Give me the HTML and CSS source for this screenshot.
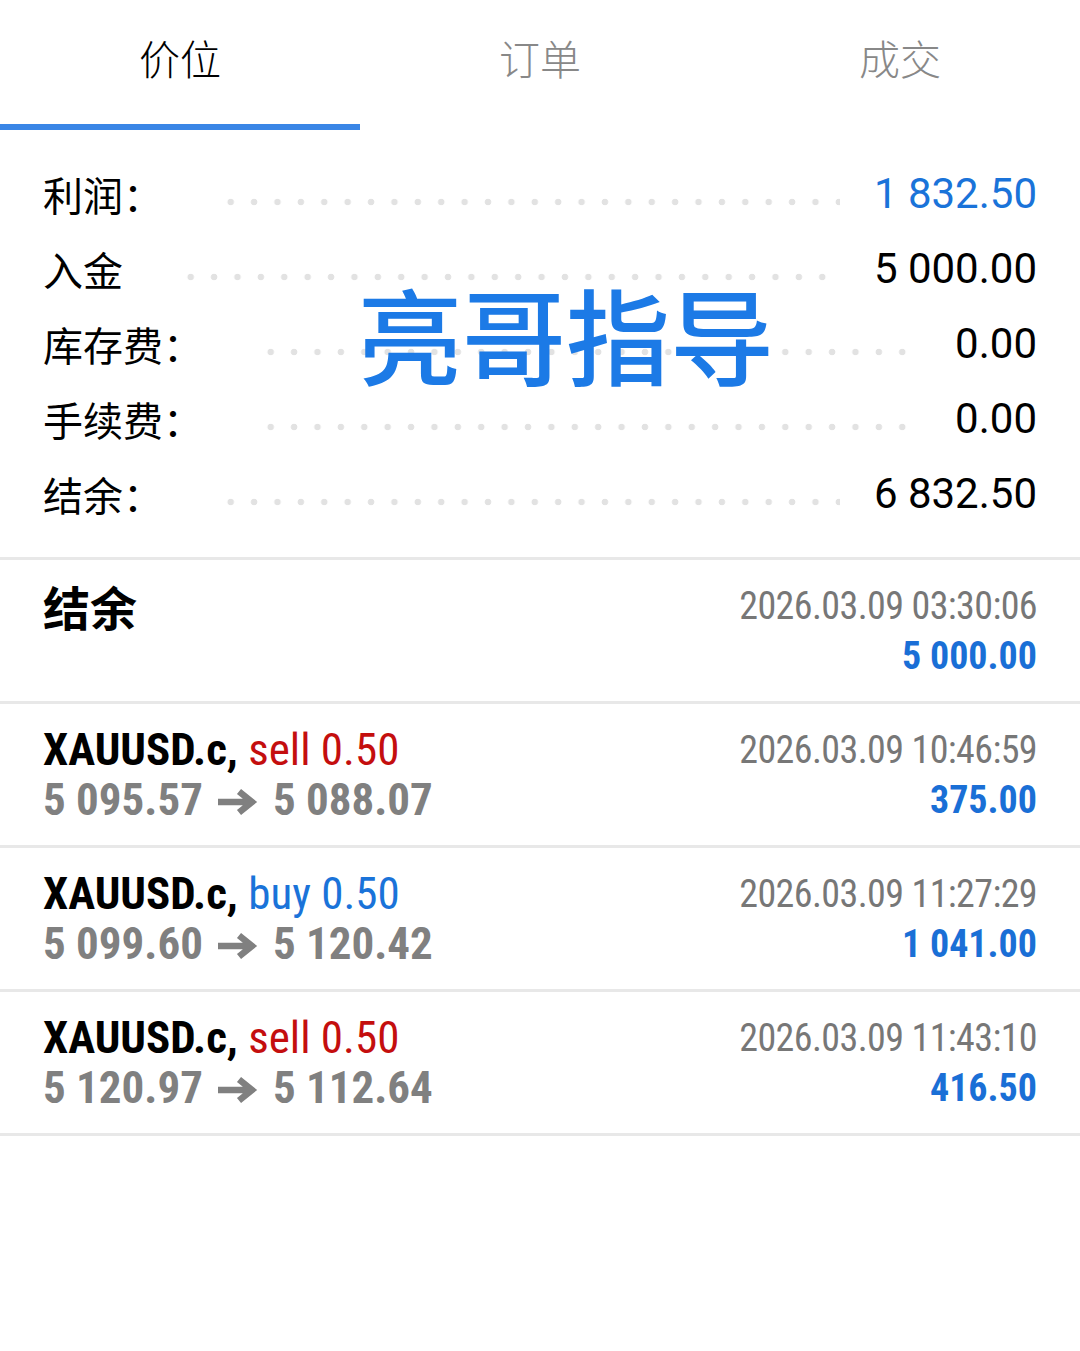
FILE: index.html
```html
<!DOCTYPE html>
<html lang="zh-CN">
<head>
    <meta charset="UTF-8">
    <meta name="viewport" content="width=device-width, initial-scale=1.0">
    <title>历史</title>
    <link rel="stylesheet" href="styles.css">
</head>
<body>
    <!-- 顶部选项卡 -->
    <div class="tabs">
        <div class="tab active">价位</div>
        <div class="tab">订单</div>
        <div class="tab">成交</div>
    </div>

    <!-- 汇总 -->
    <div class="summary">
        <div class="sum-row">
            <span class="label">利润：</span>
            <span class="leader"></span>
            <span class="value blue">1 832.50</span>
        </div>
        <div class="sum-row">
            <span class="label">入金</span>
            <span class="leader"></span>
            <span class="value">5 000.00</span>
        </div>
        <div class="sum-row">
            <span class="label">库存费：</span>
            <span class="leader"></span>
            <span class="value">0.00</span>
        </div>
        <div class="sum-row">
            <span class="label">手续费：</span>
            <span class="leader"></span>
            <span class="value">0.00</span>
        </div>
        <div class="sum-row">
            <span class="label">结余：</span>
            <span class="leader"></span>
            <span class="value">6 832.50</span>
        </div>
        <div class="watermark">亮哥指导</div>
    </div>

    <!-- 成交记录 -->
    <div class="deals">
        <div class="deal">
            <div class="deal-left">
                <div class="deal-title">结余</div>
            </div>
            <div class="deal-right">
                <div class="deal-time">2026.03.09 03:30:06</div>
                <div class="deal-profit">5 000.00</div>
            </div>
        </div>
        <div class="deal">
            <div class="deal-left">
                <div class="deal-symbol">XAUUSD.c, <span class="sell">sell 0.50</span></div>
                <div class="deal-price">5 095.57<svg class="arrow" viewBox="0 0 40 26"><path d="M0 13H33M21 2.5L34 13L21 23.5"/></svg>5 088.07</div>
            </div>
            <div class="deal-right">
                <div class="deal-time">2026.03.09 10:46:59</div>
                <div class="deal-profit">375.00</div>
            </div>
        </div>
        <div class="deal">
            <div class="deal-left">
                <div class="deal-symbol">XAUUSD.c, <span class="buy">buy 0.50</span></div>
                <div class="deal-price">5 099.60<svg class="arrow" viewBox="0 0 40 26"><path d="M0 13H33M21 2.5L34 13L21 23.5"/></svg>5 120.42</div>
            </div>
            <div class="deal-right">
                <div class="deal-time">2026.03.09 11:27:29</div>
                <div class="deal-profit">1 041.00</div>
            </div>
        </div>
        <div class="deal">
            <div class="deal-left">
                <div class="deal-symbol">XAUUSD.c, <span class="sell">sell 0.50</span></div>
                <div class="deal-price">5 120.97<svg class="arrow" viewBox="0 0 40 26"><path d="M0 13H33M21 2.5L34 13L21 23.5"/></svg>5 112.64</div>
            </div>
            <div class="deal-right">
                <div class="deal-time">2026.03.09 11:43:10</div>
                <div class="deal-profit">416.50</div>
            </div>
        </div>
    </div>
</body>
</html>
```

FILE: styles.css
```css
body {
    margin: 0;
    padding: 0;
    background: #fff;
    font-family: Roboto, "Noto Sans CJK SC", sans-serif;
    color: #000;
}

/* 选项卡 */
.tabs {
    display: flex;
    height: 130px;
}

.tab {
    position: relative;
    flex: 1;
    text-align: center;
    font-family: "Noto Sans CJK SC", sans-serif;
    font-size: 41px;
    font-weight: 300;
    line-height: 114px;
    color: #888;
}

.tab.active {
    color: #000;
}

.tab.active::after {
    content: "";
    position: absolute;
    left: 0;
    right: 0;
    bottom: 0;
    height: 6px;
    background-color: #3a86e6;
}

/* 汇总 */
.summary {
    position: relative;
    padding: 26px 43px 26px 43px;
    border-bottom: 3px solid #e8e8e8;
}

.sum-row {
    display: flex;
    align-items: center;
    height: 75px;
}

.label {
    font-family: "Noto Sans CJK SC", sans-serif;
    font-size: 40px;
    font-weight: 400;
    margin-right: 56px;
}

.leader {
    flex: 1;
    height: 8px;
    margin-top: 16px;
    margin-right: 34px;
    background-image: radial-gradient(circle, #e2e2e2 3px, transparent 3.6px);
    background-size: 23.4px 8px;
    background-repeat: repeat-x;
}

.value {
    font-family: Roboto, sans-serif;
    font-size: 42px;
}

.blue {
    color: #1a73d9;
}

.watermark {
    position: absolute;
    left: 358px;
    top: 138px;
    font-family: "Noto Sans CJK SC", sans-serif;
    font-size: 104px;
    font-weight: 500;
    line-height: 130px;
    color: #1c7ae6;
}

/* 成交记录 */
.deal {
    display: flex;
    justify-content: space-between;
    padding: 21px 43px 20px 43px;
    border-bottom: 3px solid #e8e8e8;
}

.deal-left,
.deal-right {
    display: flex;
    flex-direction: column;
}

.deal-right {
    align-items: flex-end;
}

.deal-title {
    font-family: "Noto Sans CJK SC", sans-serif;
    font-size: 47px;
    font-weight: 700;
    line-height: 50px;
}

.deal-symbol,
.deal-price,
.deal-time,
.deal-profit {
    font-family: "Roboto Condensed", "Liberation Sans Narrow", "DejaVu Sans Condensed", Roboto, sans-serif;
    line-height: 50px;
    white-space: nowrap;
}

.deal-symbol {
    font-size: 45px;
    font-weight: 700;
}

.sell {
    font-weight: 400;
    color: #c40e0e;
}

.buy {
    font-weight: 400;
    color: #1a73d9;
}

.deal-price {
    display: flex;
    align-items: center;
    height: 50px;
    font-size: 45px;
    font-weight: 700;
    color: #808080;
}

.arrow {
    width: 40px;
    height: 26px;
    margin: 4px 15px 0 15px;
    fill: none;
    stroke: #808080;
    stroke-width: 6.5;
}

.deal-time {
    font-size: 38px;
    letter-spacing: -0.6px;
    color: #777;
}

.deal-profit {
    font-size: 38px;
    font-weight: 700;
    color: #1a6fd6;
}
```
